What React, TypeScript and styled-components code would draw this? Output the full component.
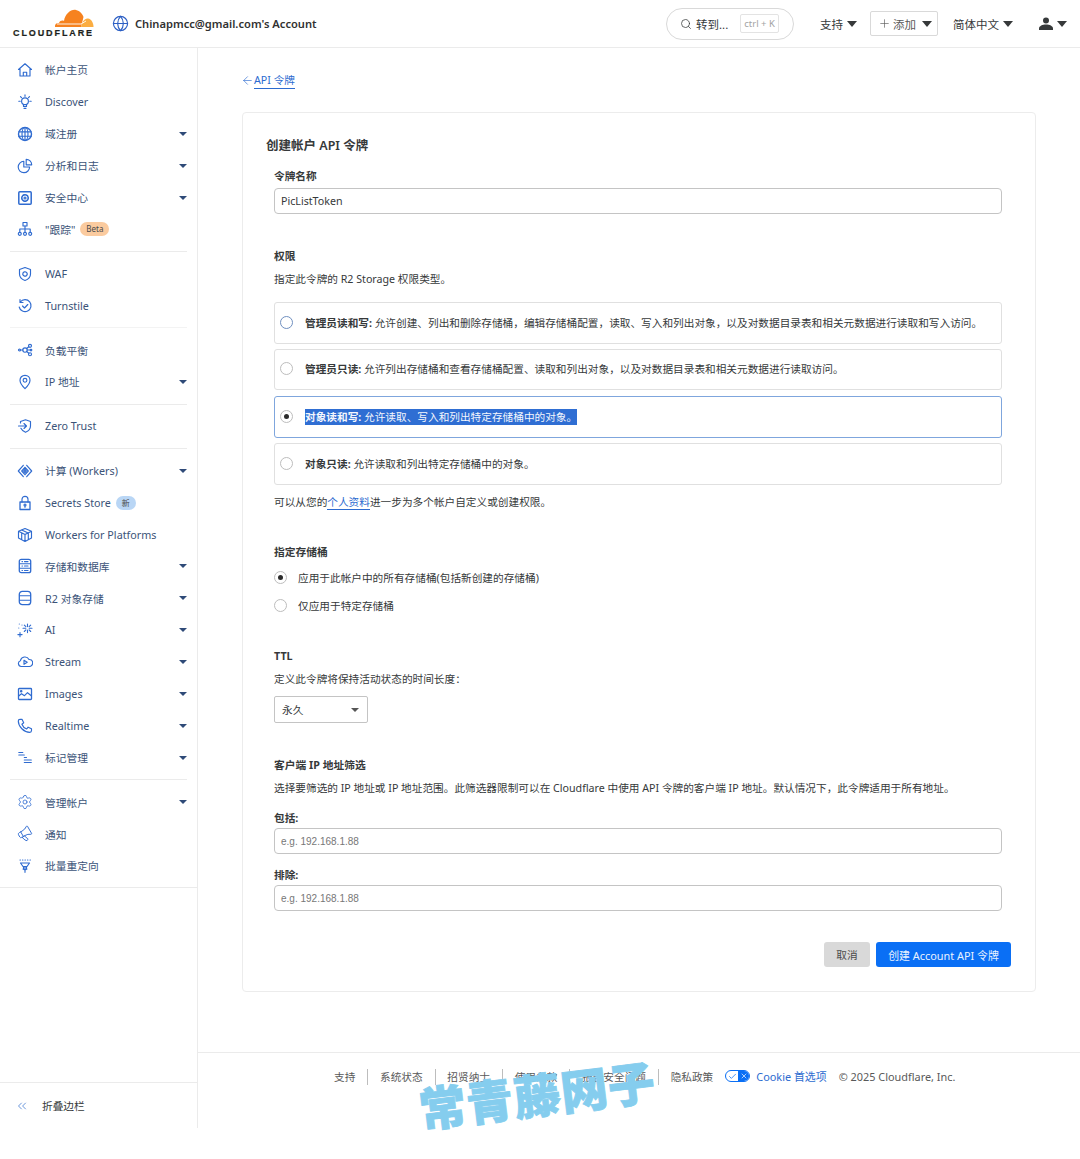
import React from 'react';
import styled, { createGlobalStyle } from 'styled-components';
import { Settings, Megaphone, ChevronsLeft, Search, Plus, ArrowLeft, Globe, X, Check } from 'lucide-react';

const Global = createGlobalStyle`
  html, body { margin: 0; padding: 0; background: #fff; }
  body { font-family: "Noto Sans", "Noto Sans CJK SC", sans-serif; color: #36393a; font-size: 10.67px; }
  * { box-sizing: border-box; }
`;
const Page = styled.div`position: relative; width: 1080px; height: 1159px; overflow: hidden;`;
const Header = styled.header`height: 48px; border-bottom: 1px solid #ebebeb; display: flex; align-items: center; padding: 0 13px;`;
const LogoBox = styled.div`width: 81px; height: 30px; display: flex; flex-direction: column; align-items: flex-end;`;
const LogoText = styled.span`font: 700 9px/9px "Liberation Sans", sans-serif; letter-spacing: 1.9px; color: #1d1f20; -webkit-text-stroke: 0.2px #1d1f20; white-space: nowrap; margin-top: 1px;`;
const AccountGlobe = styled.span`display: flex; margin-left: 18px; margin-right: 6px; color: #2c5fc4;`;
const AccountName = styled.span`font-weight: 600; font-size: 11.15px; color: #313131;`;
const Spacer = styled.div`flex: 1;`;
const SearchPill = styled.div`width: 128px; height: 32px; border: 1px solid #d9d9d9; border-radius: 16px; display: flex; align-items: center; padding-left: 13px; font-size: 11.5px; color: #36393a; gap: 4px;`;
const Kbd = styled.span`font-size: 9.5px; color: #a3a3a3; border: 1px solid #e3e3e3; border-radius: 2px; padding: 0 3px; height: 19px; line-height: 17px; margin-left: 8px; white-space: nowrap;`;
const Caret = styled.span`display: inline-block; width: 0; height: 0; border-left: 5px solid transparent; border-right: 5px solid transparent; border-top: 6px solid #36393a; margin-left: 4px;`;
const TopItem = styled.div<{ $ml: number }>`display: flex; align-items: center; font-size: 11.5px; color: #36393a; margin-left: ${p => p.$ml}px; white-space: nowrap;`;
const AddButton = styled.div`display: flex; align-items: center; margin-left: 13px; width: 68px; height: 25px; border: 1px solid #d9d9d9; border-radius: 2px; padding-left: 7px; font-size: 11.5px; color: #595959; gap: 2px;`;
const Body = styled.div`display: flex; height: 1080px;`;
const Sidebar = styled.nav`width: 198px; flex: none; border-right: 1px solid #ebebeb; display: flex; flex-direction: column;`;
const NavList = styled.div`padding: 6px 10px 4.9px; border-bottom: 1px solid #ebebeb;`;
const NavRow = styled.div`height: 31.9px; display: flex; align-items: center; color: #3b5378; font-size: 10.75px;`;
const NavIcon = styled.span`width: 35px; padding-left: 7px; display: flex; color: #2f6bd0; flex: none;`;
const NavLabel = styled.span`white-space: nowrap;`;
const NavCaret = styled.span`margin-left: auto; width: 0; height: 0; border-left: 4px solid transparent; border-right: 4px solid transparent; border-top: 4px solid #2f4a78;`;
const Badge = styled.span<{ $bg: string }>`margin-left: 5px; height: 14px; padding: 0 6px; line-height: 14px; border-radius: 7px; font-size: 8px; background: ${p => p.$bg}; color: #4a4a4a;`;
const Divider = styled.div<{ $light?: boolean }>`border-top: 1px solid ${p => (p.$light ? '#f3f3f3' : '#ebebeb')}; margin: 5.75px 0;`;
const Collapse = styled.div`margin-top: auto; border-top: 1px solid #ebebeb; height: 46px; display: flex; align-items: center; padding-left: 15px; color: #36393a; font-size: 10.67px; gap: 13px;`;
const CollapseIcon = styled.span`display: flex; color: #4a80d4;`;
const Main = styled.main`flex: 1; display: flex; flex-direction: column;`;
const Content = styled.div`padding: 24px 44px 0;`;
const BackLink = styled.div`display: flex; align-items: center; height: 17px; color: #2c6bd0; font-size: 10.67px;`;
const BackArrow = styled.span`display: flex; margin-left: -1px; margin-right: 0;`;
const BackText = styled.span`border-bottom: 1px solid #2c6bd0; line-height: 15px;`;
const Card = styled.section`margin-top: 23px; height: 880px; border: 1px solid #ececec; border-radius: 4px; padding: 24px 23px 0;`;
const CardTitle = styled.h1`margin: 0; font-size: 12.5px; line-height: 18px; font-weight: 600; color: #36393a;`;
const Form = styled.div`padding: 0 10px 0 8px;`;
const FieldLabel = styled.div<{ $mt: number }>`font-size: 10.67px; line-height: 14px; font-weight: 700; color: #36393a; margin-top: ${p => p.$mt}px;`;
const SectionTitle = styled.div<{ $mt: number }>`font-size: 10.75px; line-height: 14px; font-weight: 700; color: #36393a; margin-top: ${p => p.$mt}px;`;
const Para = styled.div<{ $mt: number }>`font-size: 10.67px; line-height: 14px; color: #36393a; margin-top: ${p => p.$mt}px; white-space: nowrap;`;
const TextBox = styled.div<{ $placeholder?: boolean; $mt: number }>`height: 26px; margin-top: ${p => p.$mt}px; border: 1px solid #c4c4c4; border-radius: 4px; display: flex; align-items: center; padding-left: 6px; font-size: ${p => (p.$placeholder ? 10 : 10.67)}px; color: ${p => (p.$placeholder ? '#777' : '#36393a')}; font-family: ${p => (p.$placeholder ? '"Liberation Sans", sans-serif' : 'inherit')};`;
const Option = styled.div<{ $active?: boolean; $h: number; $mt: number }>`height: ${p => p.$h}px; margin-top: ${p => p.$mt}px; border: 1px solid ${p => (p.$active ? '#7fa6dd' : '#e0e0e0')}; border-radius: 3px; display: flex; align-items: center; padding-left: 5px; gap: 12px; font-size: 10.67px; white-space: nowrap;`;
const OptionText = styled.span`margin-bottom: 2px;`;
const Radio = styled.span<{ $checked?: boolean; $blue?: boolean }>`width: 13px; height: 13px; flex: none; border-radius: 50%; border: 1px solid ${p => (p.$blue ? '#6f8fc0' : '#bdbdbd')}; display: flex; align-items: center; justify-content: center; margin-top: -2px;
  &::after { content: ''; width: 5px; height: 5px; border-radius: 50%; background: ${p => (p.$checked ? '#2b2b2b' : 'transparent')}; }`;
const Strong = styled.b`font-weight: 700;`;
const Selected = styled.span`background: #2f6ed3; color: #f4f7fd; line-height: 16px;`;
const InlineLink = styled.span`color: #2c6bd0; border-bottom: 1px solid #2c6bd0;`;
const RadioRow = styled.div<{ $mt: number }>`display: flex; align-items: center; gap: 11px; margin-top: ${p => p.$mt}px; height: 14px; font-size: 10.67px;`;
const SelectBox = styled.div`width: 94px; height: 27px; margin-top: 10px; border: 1px solid #c4c4c4; border-radius: 2px; display: flex; align-items: center; justify-content: space-between; padding: 0 8px 0 7px; font-size: 10.67px;`;
const SmallCaret = styled.span`width: 0; height: 0; border-left: 4px solid transparent; border-right: 4px solid transparent; border-top: 4px solid #555;`;
const Buttons = styled.div`display: flex; justify-content: flex-end; gap: 6px; margin-top: 31px; margin-right: -9px;`;
const Cancel = styled.div`width: 46px; height: 25px; background: #d9d9d9; border-radius: 3px; display: flex; align-items: center; justify-content: center; font-size: 10.67px; color: #4a4a4a;`;
const Create = styled.div`width: 135px; height: 25px; background: #0a6ff5; border-radius: 3px; display: flex; align-items: center; justify-content: center; font-size: 10.9px; color: #e9f2ff;`;
const Footer = styled.footer`margin-top: auto; height: 76px; border-top: 1px solid #ebebeb; display: flex; align-items: flex-start; padding: 16px 0 0 136px; font-size: 10.67px; color: #595959;`;
const FootLink = styled.span<{ $sep?: boolean }>`padding-right: ${p => (p.$sep ? 12 : 0)}px; margin-right: ${p => (p.$sep ? 11.7 : 12)}px; line-height: 16px; white-space: nowrap; border-right: ${p => (p.$sep ? '1px solid #bdbdbd' : '0')};`;
const CookieToggle = styled.span`display: inline-flex; width: 25px; height: 12px; margin-top: 1px; border: 1px solid #0a6ff5; border-radius: 6px; overflow: hidden; margin-right: 6px; flex: none;`;
const CookieOn = styled.span`width: 12px; display: flex; align-items: center; justify-content: center; color: #0a6ff5;`;
const CookieOff = styled.span`flex: 1; background: #0a6ff5; display: flex; align-items: center; justify-content: center; color: #fff;`;
const CookieLink = styled.span`color: #2c6bd0; margin-right: 12px; white-space: nowrap; line-height: 16px; font-size: 10.9px;`;
const Copy = styled.span`white-space: nowrap; line-height: 16px; font-size: 10.9px;`;
const Watermark = styled.div`position: absolute; left: 419px; top: 1083px; font-family: "Noto Sans CJK SC", sans-serif; font-weight: 900; font-size: 47px; line-height: 50px; letter-spacing: 0.5px; color: #85cdee; -webkit-text-stroke: 0.8px #85cdee; white-space: nowrap; transform: rotate(-7deg); transform-origin: left center;`;

const G = ({ children }: { children: React.ReactNode }) => (
  <svg width="16" height="16" viewBox="0 0 16 16" fill="none" stroke="currentColor" strokeWidth="1.15" strokeLinecap="round" strokeLinejoin="round">{children}</svg>
);
const P = ({ d }: { d: string }) => <path d={d} />;

type Item = { i?: React.ReactNode; t?: string; c?: boolean; b?: [string, string]; d?: 'light' | 'solid' };
const items: Item[] = [
  { i: <G><P d="M1.500 7.500 8 1.800l6.500 5.700M3 6.500V14h10V6.500M6.300 14v-3.800h3.400V14" /></G>, t: '帐户主页' },
  { i: <G><circle cx="8" cy="7.200" r="3.400" /><P d="M6.500 10.300v2.200h3v-2.200M7 14.300h2M8 .9v1.400M1.800 7.200h1.400M12.800 7.200h1.400M3.500 2.700l1 1M12.500 2.700l-1 1" /></G>, t: 'Discover' },
  { i: <G><circle cx="8" cy="8" r="6.500" strokeWidth="1.400" /><ellipse cx="8" cy="8" rx="3" ry="6.500" /><P d="M1.800 5.800h12.400M1.800 10.200h12.400M8 1.500v13" /></G>, t: '域注册', c: true },
  { i: <G><P d="M6.800 3.300A5.700 5.700 0 1 0 12.600 9H6.800z" /><P d="M9.200 1.300a5.500 5.500 0 0 1 5.500 5.500H9.200z" /></G>, t: '分析和日志', c: true },
  { i: <G><rect x="1.800" y="1.800" width="12.400" height="12.400" rx="1" strokeWidth="1.500" /><circle cx="8" cy="8" r="3.200" strokeWidth="1.600" strokeDasharray="1.300 .8" /><circle cx="8" cy="8" r="1" /></G>, t: '安全中心', c: true },
  { i: <G><rect x="6" y="1.500" width="4" height="3.500" /><P d="M8 5v6M2.800 11V8h10.400v3" /><circle cx="2.800" cy="12.800" r="1.500" /><circle cx="8" cy="12.800" r="1.500" /><circle cx="13.200" cy="12.800" r="1.500" /></G>, t: '"跟踪"', b: ['Beta', '#fbcb9f'] },
  { d: 'solid' },
  { i: <G><P d="M8 1.500 13.500 3.500v4.500c0 3-2.500 5.500-5.500 6.500C5 13.500 2.500 11 2.500 8V3.500z" /><circle cx="8" cy="8" r="2.200" strokeWidth="1.300" strokeDasharray="1.200 .6" /></G>, t: 'WAF' },
  { i: <G><P d="M3.300 4A6 6 0 1 1 2.200 9M3 1.500v3h3M5.500 8l2 2 3.300-3.500" /></G>, t: 'Turnstile' },
  { d: 'light' },
  { i: <G><circle cx="2.500" cy="8" r="1" /><circle cx="8" cy="8" r="2.200" /><circle cx="13" cy="3.800" r="1.500" /><circle cx="13" cy="12.200" r="1.500" /><circle cx="14" cy="8" r=".8" /><P d="M3.500 8h2.300M9.700 6.500l2.100-1.800M9.700 9.500l2.100 1.800M10.200 8h3" /></G>, t: '负载平衡' },
  { i: <G><P d="M8 1.300c3 0 5 2.200 5 5 0 3.500-5 8.400-5 8.400S3 9.800 3 6.300c0-2.800 2-5 5-5z" /><circle cx="8" cy="6.300" r="1.900" /></G>, t: 'IP 地址', c: true },
  { d: 'solid' },
  { i: <G><P d="M3.500 5V3.500L8.500 1.800l5 1.700V8c0 3-2.500 5.300-5 6.300-2-.8-3.700-2.200-4.600-4M1.500 8h8M7 5.500 9.500 8 7 10.500" /></G>, t: 'Zero Trust' },
  { d: 'solid' },
  { i: <G><P d="M6.300 2.300 1.300 8l5 5.700M9.700 2.300l5 5.700-5 5.700M8 4.300 4.700 8 8 11.700 11.300 8zM8 6.500 6.700 8 8 9.500 9.300 8z" /></G>, t: '计算 (Workers)', c: true },
  { i: <G><rect x="3" y="7" width="10" height="7.500" strokeWidth="1.300" /><P d="M5 7V4.300a3 3 0 0 1 6 0V7M8 11v1.300" /><circle cx="8" cy="10" r="1" /></G>, t: 'Secrets Store', b: ['新', '#b9d6f5'] },
  { i: <G><P d="M8 1.500 14.500 4.300v6.700L8 14.500 1.500 11V4.300zM1.500 4.300 8 7.500l6.500-3.200M8 7.500v7M4.700 2.900l6.500 3M4.700 5.900v5.800M11.300 5.900v5.800" /></G>, t: 'Workers for Platforms' },
  { i: <G><rect x="2.300" y="1.300" width="11.400" height="13.400" rx="2" strokeWidth="1.300" /><P d="M2.500 5.700h11M2.500 10.200h11M5 3.600h.5M7.500 3.600h3.500M5 8h.5M7.500 8h3.500M5 12.500h.5M7.500 12.500h3.500" /></G>, t: '存储和数据库', c: true },
  { i: <G><rect x="2.300" y="1.300" width="11.400" height="13.400" rx="3" strokeWidth="1.300" /><P d="M2.500 5.700h11M2.500 10.200h11" /></G>, t: 'R2 对象存储', c: true },
  { i: <G><g strokeWidth="1.100"><P d="M10.500 2v2.600M10.500 8v2.600M6 6.300h2.800M12.200 6.300H15M7.300 3.100l1.600 1.600M13.700 3.100l-1.600 1.600M7.300 9.500l1.600-1.600M13.700 9.500l-1.600-1.600M3 10.500v4.200M.9 12.600h4.200M2.300 2v.01M5 3v.01M1.800 6v.01" /></g></G>, t: 'AI', c: true },
  { i: <G><P d="M4.200 12.500a3 3 0 0 1-.8-5.800A4.600 4.600 0 0 1 12 5.500a3.500 3.500 0 0 1 .3 7zM7 6.300v4l3.200-2z" /></G>, t: 'Stream', c: true },
  { i: <G><rect x="1.500" y="2.500" width="13" height="11" rx=".8" strokeWidth="1.300" /><P d="M1.700 10l2.800-2.300 3 2 3-3 3.800 3" /><circle cx="4.200" cy="5.300" r=".7" /></G>, t: 'Images', c: true },
  { i: <G><P d="M3 1.300h2l1.700 3.500-1.800 1.400a8 8 0 0 0 4.800 4.800l1.400-1.800 3.400 1.600v1.700c0 1-.8 1.800-1.800 1.800C7 14.300 1.300 8.600 1.300 3c0-1 .7-1.700 1.700-1.700z" /></G>, t: 'Realtime', c: true },
  { i: <G><P d="M1.800 2.500h4M1.800 5h5.500M7.300 7.500h2.200M7.300 10h7M7.300 12.500h7" /></G>, t: '标记管理', c: true },
  { d: 'solid' },
  { i: <Settings size={16} strokeWidth={1.2} />, t: '管理帐户', c: true },
  { i: <Megaphone size={16} strokeWidth={1.3} style={{ transform: 'rotate(-30deg)' }} />, t: '通知' },
  { i: <G><P d="M3.500 5h9L10 8.500H6zM6.500 8.500V11M9.500 8.500V11M8 9v5.300M8 12l-2-1M8 12l2-1M3 2h.4M5.500 2h.4M8 2h.4M10.500 2h.4M13 2h.4" /></G>, t: '批量重定向' },
];

const CloudLogo = () => (
  <svg width="40" height="19" viewBox="0 0 40 19">
    <path d="M1 18 C.5 15 3 13.500 5 14 C6 11.500 8.500 11 10 12 C11 5 17 0 22 1 C26 1.800 28.500 5 29.500 8 L27 18 Z" fill="#f6821f" />
    <path d="M27 18 C28 13 30.500 9 34 9.500 C37.500 10 39.500 14 39.500 18 Z" fill="#fbad41" />
    <path d="M3 15 H27 M27 15 l5 -3" stroke="#fff" strokeWidth=".9" />
  </svg>
);

const UserGlyph = () => (
  <svg width="14" height="13" viewBox="0 0 14 13" fill="#36393a"><circle cx="7" cy="3.500" r="3" /><path d="M0 13v-1.500C0 9 3.500 7.500 7 7.500s7 1.500 7 4V13z" /></svg>
);

export default function App() {
  return (
    <Page>
      <Global />
      <Header>
        <LogoBox>
          <CloudLogo />
          <LogoText>CLOUDFLARE</LogoText>
        </LogoBox>
        <AccountGlobe><Globe size={17} strokeWidth={1.6} /></AccountGlobe>
        <AccountName>Chinapmcc@gmail.com's Account</AccountName>
        <Spacer />
        <SearchPill>
          <Search size={12} strokeWidth={1.5} />
          转到...
          <Kbd>ctrl + K</Kbd>
        </SearchPill>
        <TopItem $ml={26}>支持<Caret /></TopItem>
        <AddButton><Plus size={13} strokeWidth={1.2} />添加<Caret /></AddButton>
        <TopItem $ml={15}>简体中文<Caret /></TopItem>
        <TopItem $ml={26}><UserGlyph /><Caret /></TopItem>
      </Header>
      <Body>
        <Sidebar>
          <NavList>
            {items.map((it, n) =>
              it.d ? <Divider key={n} $light={it.d === 'light'} /> : (
                <NavRow key={n}>
                  <NavIcon>{it.i}</NavIcon>
                  <NavLabel>{it.t}</NavLabel>
                  {it.b && <Badge $bg={it.b[1]}>{it.b[0]}</Badge>}
                  {it.c && <NavCaret />}
                </NavRow>
              ),
            )}
          </NavList>
          <Collapse>
            <CollapseIcon><ChevronsLeft size={14} strokeWidth={1.4} /></CollapseIcon>
            折叠边栏
          </Collapse>
        </Sidebar>
        <Main>
          <Content>
            <BackLink><BackArrow><ArrowLeft size={13} strokeWidth={1.2} /></BackArrow><BackText>API 令牌</BackText></BackLink>
            <Card>
              <CardTitle>创建帐户 API 令牌</CardTitle>
              <Form>
                <FieldLabel $mt={14}>令牌名称</FieldLabel>
                <TextBox $mt={5}>PicListToken</TextBox>
                <SectionTitle $mt={35}>权限</SectionTitle>
                <Para $mt={9}>指定此令牌的 R2 Storage 权限类型。</Para>
                <Option $h={42} $mt={16}><Radio $blue /><OptionText><Strong>管理员读和写:</Strong> 允许创建、列出和删除存储桶，编辑存储桶配置，读取、写入和列出对象，以及对数据目录表和相关元数据进行读取和写入访问。</OptionText></Option>
                <Option $h={41} $mt={5}><Radio /><OptionText><Strong>管理员只读:</Strong> 允许列出存储桶和查看存储桶配置、读取和列出对象，以及对数据目录表和相关元数据进行读取访问。</OptionText></Option>
                <Option $h={42} $mt={6} $active><Radio $checked /><Selected><Strong>对象读和写:</Strong> 允许读取、写入和列出特定存储桶中的对象。</Selected></Option>
                <Option $h={42} $mt={5}><Radio /><OptionText><Strong>对象只读:</Strong> 允许读取和列出特定存储桶中的对象。</OptionText></Option>
                <Para $mt={10}>可以从您的<InlineLink>个人资料</InlineLink>进一步为多个帐户自定义或创建权限。</Para>
                <SectionTitle $mt={36}>指定存储桶</SectionTitle>
                <RadioRow $mt={12}><Radio $checked /><OptionText>应用于此帐户中的所有存储桶(包括新创建的存储桶)</OptionText></RadioRow>
                <RadioRow $mt={14}><Radio /><OptionText>仅应用于特定存储桶</OptionText></RadioRow>
                <SectionTitle $mt={36}>TTL</SectionTitle>
                <Para $mt={9}>定义此令牌将保持活动状态的时间长度：</Para>
                <SelectBox>永久<SmallCaret /></SelectBox>
                <SectionTitle $mt={35}>客户端 IP 地址筛选</SectionTitle>
                <Para $mt={9}>选择要筛选的 IP 地址或 IP 地址范围。此筛选器限制可以在 Cloudflare 中使用 API 令牌的客户端 IP 地址。默认情况下，此令牌适用于所有地址。</Para>
                <FieldLabel $mt={16}>包括:</FieldLabel>
                <TextBox $placeholder $mt={3}>e.g. 192.168.1.88</TextBox>
                <FieldLabel $mt={14}>排除:</FieldLabel>
                <TextBox $placeholder $mt={3}>e.g. 192.168.1.88</TextBox>
                <Buttons>
                  <Cancel>取消</Cancel>
                  <Create>创建 Account API 令牌</Create>
                </Buttons>
              </Form>
            </Card>
          </Content>
          <Footer>
            <FootLink $sep>支持</FootLink>
            <FootLink $sep>系统状态</FootLink>
            <FootLink $sep>招贤纳士</FootLink>
            <FootLink $sep>使用条款</FootLink>
            <FootLink $sep>报告安全问题</FootLink>
            <FootLink>隐私政策</FootLink>
            <CookieToggle>
              <CookieOn><Check size={9} strokeWidth={2} /></CookieOn>
              <CookieOff><X size={8} strokeWidth={2} /></CookieOff>
            </CookieToggle>
            <CookieLink>Cookie 首选项</CookieLink>
            <Copy>© 2025 Cloudflare, Inc.</Copy>
          </Footer>
        </Main>
      </Body>
      <Watermark>常青藤网子</Watermark>
    </Page>
  );
}
